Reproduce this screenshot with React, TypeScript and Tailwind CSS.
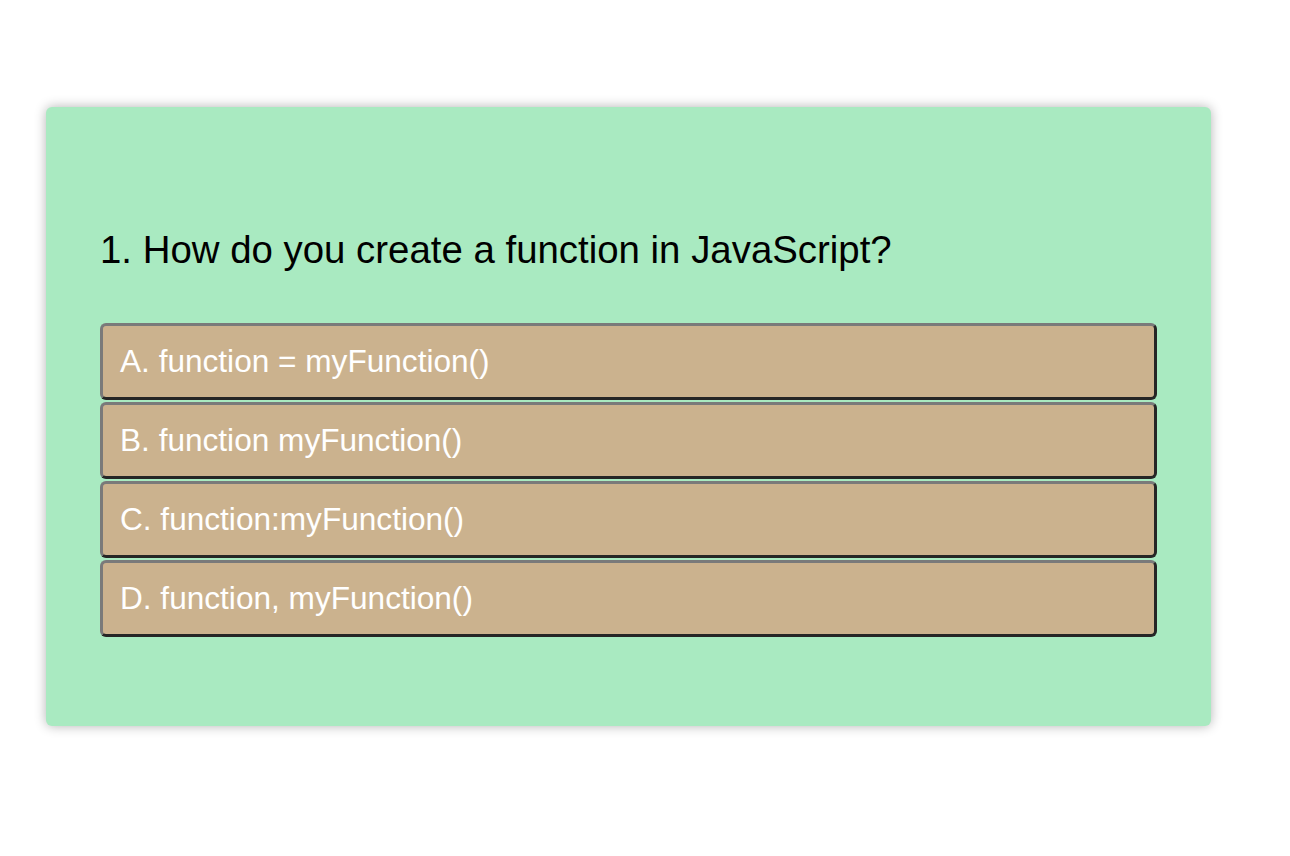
const options = [
  "A. function = myFunction()",
  "B. function myFunction()",
  "C. function:myFunction()",
  "D. function, myFunction()",
];

export default function App() {
  return (
    <div className="min-h-[856px] w-full bg-white pt-[107px] font-['Liberation_Sans',Arial,sans-serif]">
      <div className="ml-[46px] w-[1165px] rounded-[6px] bg-[#a9eac1] px-[54px] pb-[89px] pt-[121px] shadow-[0_0_12px_rgba(0,0,0,0.3)]">
        <h1 className="text-[38.4px] leading-[44px] text-black">
          1. How do you create a function in JavaScript?
        </h1>
        <div className="mt-[51px] flex flex-col gap-[2px]">
          {options.map((o) => (
            <button
              key={o}
              className="h-[77px] w-full rounded-[6px] border-[3px] border-t-[#7a7a7a] border-l-[#7a7a7a] border-b-[#262626] border-r-[#262626] bg-[#cbb28e] pl-[17px] text-left text-[31.6px] text-white"
            >
              {o}
            </button>
          ))}
        </div>
      </div>
    </div>
  );
}
